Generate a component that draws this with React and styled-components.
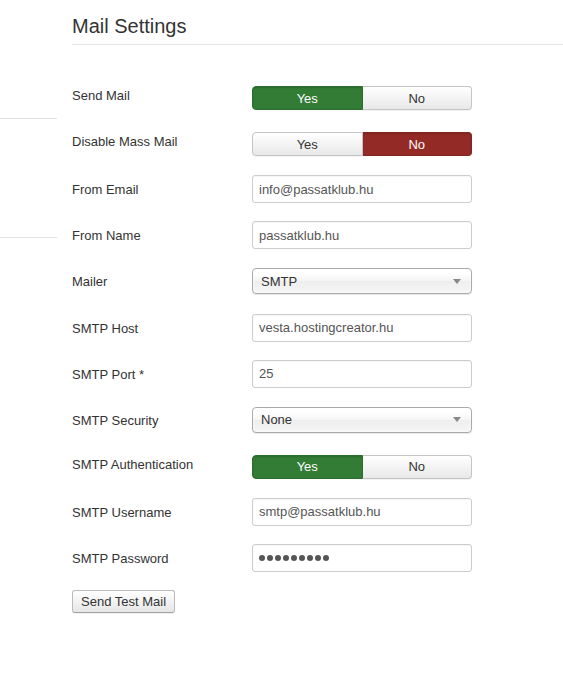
import React from 'react';
import styled, {createGlobalStyle} from 'styled-components';

const GlobalStyle = createGlobalStyle`
  html, body {
    margin: 0;
    padding: 0;
    background: #fff;
  }
  body {
    font-family: "Liberation Sans", Arial, sans-serif;
    font-size: 13px;
    color: #333;
  }
`;

const fields = [
    {label: 'Send Mail', type: 'toggle', value: 'yes'},
    {label: 'Disable Mass Mail', type: 'toggle', value: 'no'},
    {label: 'From Email', type: 'text', value: 'info@passatklub.hu'},
    {label: 'From Name', type: 'text', value: 'passatklub.hu'},
    {label: 'Mailer', type: 'select', value: 'SMTP'},
    {label: 'SMTP Host', type: 'text', value: 'vesta.hostingcreator.hu'},
    {label: 'SMTP Port *', type: 'text', value: '25'},
    {label: 'SMTP Security', type: 'select', value: 'None'},
    {label: 'SMTP Authentication', type: 'toggle', value: 'yes'},
    {label: 'SMTP Username', type: 'text', value: 'smtp@passatklub.hu'},
    {label: 'SMTP Password', type: 'password', value: 9},
];

const Page = () => (
    <Layout>
        <Sidebar>
            <SideBlock/>
            <SideBlock/>
        </Sidebar>
        <Main>
            <Title>Mail Settings</Title>
            <Form>
                {fields.map((f) => (
                    <Row key={f.label}>
                        <Label toggle={f.type === 'toggle' ? 1 : 0}>{f.label}</Label>
                        <Control field={f}/>
                    </Row>
                ))}
                <Button>Send Test Mail</Button>
            </Form>
        </Main>
    </Layout>
);

const Control = ({field: {type, value}}) => {
    if (type === 'toggle') {
        return (
            <Toggle>
                <ToggleBtn active={value === 'yes' ? 'yes' : ''}>Yes</ToggleBtn>
                <ToggleBtn active={value === 'no' ? 'no' : ''}>No</ToggleBtn>
            </Toggle>
        );
    }
    if (type === 'select') {
        return (
            <Select>
                <span>{value}</span>
                <Arrow/>
            </Select>
        );
    }
    if (type === 'password') {
        return (
            <Input>
                {Array.from({length: value}).map((_, i) => <Dot key={i}/>)}
            </Input>
        );
    }
    return <Input>{value}</Input>;
};

export default function App() {
    return (
        <>
            <GlobalStyle/>
            <Page/>
        </>
    );
}

const Layout = styled.div`
  display: grid;
  grid-template-columns: 57px 1fr;
  column-gap: 15px;
  width: 563px;
  min-height: 678px;
`;

const Sidebar = styled.div`
  display: flex;
  flex-direction: column;
`;

const SideBlock = styled.div`
  height: 118px;
  border-bottom: 1px solid #e3e3e3;
  flex-shrink: 0;
`;

const Main = styled.div`
  padding-top: 14px;
`;

const Title = styled.h2`
  margin: 0 0 38px;
  padding-bottom: 6px;
  font-size: 20px;
  line-height: 24px;
  font-weight: normal;
  color: #333;
  border-bottom: 1px solid #e5e5e5;
`;

const Form = styled.div`
  display: flex;
  flex-direction: column;
`;

const Row = styled.div`
  display: grid;
  grid-template-columns: 180px 220px;
  height: 28px;
  margin-bottom: 18.12px;
`;

const Label = styled.div`
  padding-top: ${({toggle}) => (toggle ? '4px' : '6px')};
  line-height: 18px;
  color: #333;
`;

const Toggle = styled.div`
  display: flex;
  height: 24px;
  margin-top: 3px;
`;

const ToggleBtn = styled.div`
  flex: 1;
  display: flex;
  align-items: center;
  justify-content: center;
  font-size: 13px;
  color: ${({active}) => (active ? '#fff' : '#333')};
  background: ${({active}) =>
    active === 'yes' ? '#327c35' : active === 'no' ? '#942a25' : 'linear-gradient(#ffffff, #e8e8e8)'};
  border: 1px solid ${({active}) =>
    active === 'yes' ? '#2c6e2f' : active === 'no' ? '#842521' : '#c5c5c5'};
  box-shadow: ${({active}) => (active ? 'inset 0 1px 2px rgba(0,0,0,0.15)' : '0 1px 1px rgba(0,0,0,0.06)')};

  &:first-child {
    border-radius: 4px 0 0 4px;
  }
  &:last-child {
    border-radius: 0 4px 4px 0;
    border-left: none;
  }
`;

const Input = styled.div`
  box-sizing: border-box;
  display: flex;
  align-items: center;
  height: 28px;
  padding: 0 6px;
  border: 1px solid #ccc;
  border-radius: 3px;
  color: #555;
  font-size: 13px;
  background: #fff;
  box-shadow: inset 0 1px 1px rgba(0,0,0,0.04);
`;

const Dot = styled.span`
  width: 6px;
  height: 6px;
  border-radius: 50%;
  background: #555;
  margin-right: 2px;
`;

const Select = styled.div`
  box-sizing: border-box;
  display: flex;
  align-items: center;
  justify-content: space-between;
  height: 26px;
  margin-top: 1px;
  padding: 0 8px;
  border: 1px solid #aaa;
  border-radius: 4px;
  color: #333;
  font-size: 13px;
  background: linear-gradient(#ffffff 20%, #f4f4f4 50%, #eeeeee 52%, #f6f6f6);
  box-shadow: 0 0 3px #fff inset, 0 1px 1px rgba(0,0,0,0.1);
`;

const Arrow = styled.span`
  width: 0;
  height: 0;
  margin-right: 2px;
  border-left: 4px solid transparent;
  border-right: 4px solid transparent;
  border-top: 5px solid #888;
`;

const Button = styled.button`
  align-self: flex-start;
  height: 23px;
  margin-top: 0;
  padding: 0 8px;
  font-family: "Liberation Sans", Arial, sans-serif;
  font-size: 13px;
  color: #333;
  background: linear-gradient(#ffffff, #e6e6e6);
  border: 1px solid #bbb;
  border-bottom-color: #a2a2a2;
  border-radius: 3px;
  box-shadow: 0 1px 1px rgba(0,0,0,0.06);
`;
